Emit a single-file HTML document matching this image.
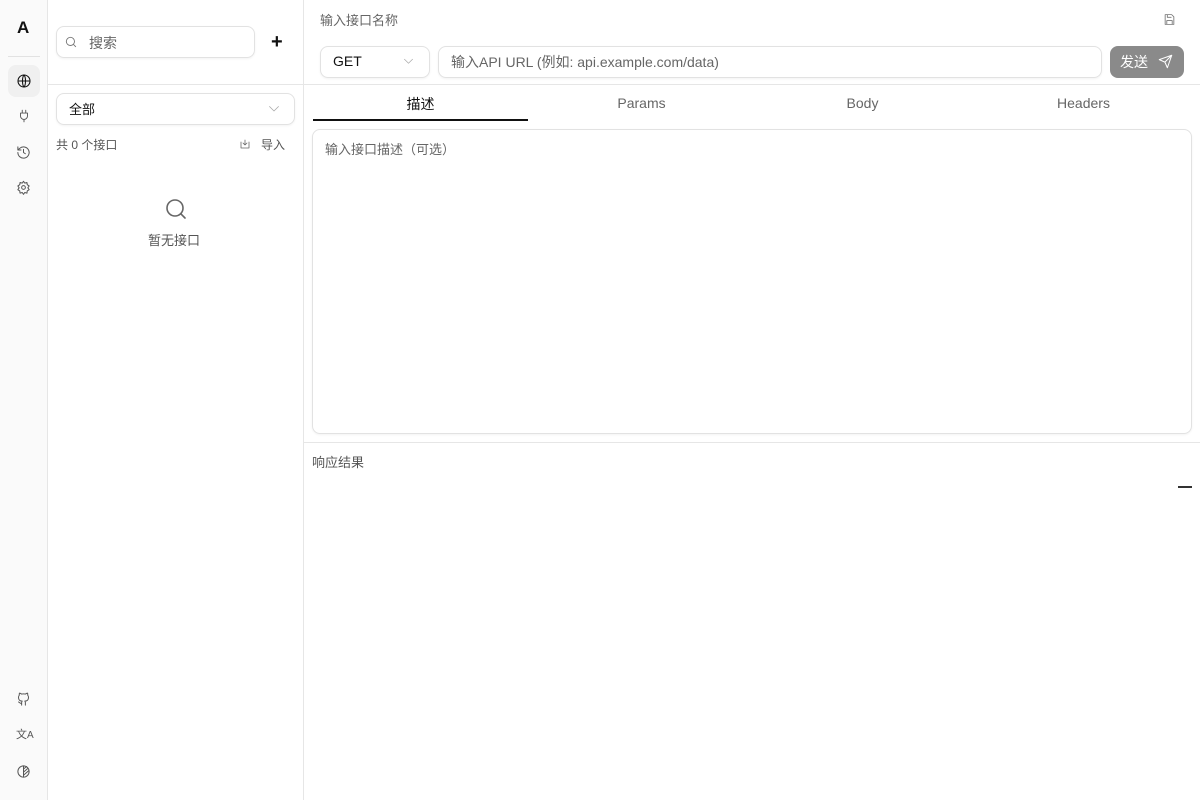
<!DOCTYPE html>
<html><head><meta charset="utf-8"><style>
*{box-sizing:border-box;margin:0;padding:0}
body{width:1200px;height:800px;overflow:hidden;background:#fff;font-family:"Liberation Sans","Noto Sans CJK SC",sans-serif;position:relative;color:#333}
.a{position:absolute}
svg{fill:none;stroke:currentColor;stroke-width:1.6;stroke-linecap:round;stroke-linejoin:round}
.ic{color:#555}
</style></head><body>
<div class="a" style="left:0;top:0;width:48px;height:800px;background:#fafafa;border-right:1px solid #e6e6e6"></div>
<div class="a" style="left:17px;top:18px;font-weight:bold;font-size:17px;color:#111">A</div>
<div class="a" style="left:8px;top:56px;width:32px;height:1px;background:#e2e2e2"></div>
<div class="a" style="left:8px;top:65px;width:32px;height:32px;border-radius:8px;background:#f0f0f0"></div>
<svg class="a" style="left:16px;top:73px;color:#111" width="16" height="16" viewBox="0 0 24 24"><circle cx="12" cy="12" r="9"/><path d="M3 12h18M12 3c3 3 3 15 0 18M12 3c-3 3-3 15 0 18"/></svg>
<svg class="a ic" style="left:17px;top:109px" width="14" height="14" viewBox="0 0 24 24"><path d="M9 2v5M15 2v5M6 7h12v5a6 6 0 0 1-12 0zM12 18v4"/></svg>
<svg class="a ic" style="left:16px;top:145px" width="15" height="15" viewBox="0 0 24 24"><path d="M3 12a9 9 0 1 0 3-6.7L3 8M3 3v5h5M12 7v5l3 2"/></svg>
<svg class="a ic" style="left:16px;top:180px" width="15" height="15" viewBox="0 0 24 24"><circle cx="12" cy="12" r="3"/><path d="M12 2l2 3 3.5-1 .5 3.5 3 2-2 3 2 3-3 2-.5 3.5-3.5-1-2 3-2-3-3.5 1-.5-3.5-3-2 2-3-2-3 3-2 .5-3.5 3.5 1z"/></svg>
<svg class="a ic" style="left:16px;top:692px" width="15" height="15" viewBox="0 0 24 24"><path d="M9 21v-4c0-1 .5-2 1-2.5-3 0-6-1.5-6-6 0-1.3.5-2.5 1.3-3.5-.2-1-.2-2.2.2-3.2 0 0 1.3 0 3.5 1.5a12 12 0 0 1 6 0C17.2 1.8 18.5 1.8 18.5 1.8c.4 1 .4 2.2.2 3.2.8 1 1.3 2.2 1.3 3.5 0 4.5-3 6-6 6 .5.5 1 1.5 1 2.5v4M9 18c-3 1-3-2-5-2"/></svg>
<div class="a ic" style="left:16px;top:726px;font-size:11px">文<span style="font-size:10px">A</span></div>
<svg class="a ic" style="left:16px;top:764px" width="15" height="15" viewBox="0 0 24 24"><circle cx="12" cy="12" r="9"/><path d="M12 3v18M12 8l5-4M12 13l7-6M12 18l8-7"/></svg>

<div class="a" style="left:303px;top:0;width:1px;height:800px;background:#e6e6e6"></div>
<div class="a" style="left:48px;top:84px;width:1152px;height:1px;background:#e6e6e6"></div>

<div class="a" style="left:56px;top:26px;width:199px;height:32px;border:1px solid #e2e2e2;border-radius:8px;box-shadow:0 1px 2px rgba(0,0,0,.05)"></div>
<svg class="a" style="left:64px;top:35px;color:#777" width="14" height="14" viewBox="0 0 24 24"><circle cx="11" cy="11" r="7"/><path d="M20 20l-4-4"/></svg>
<div class="a" style="left:89px;top:33px;font-size:14px;color:#666">搜索</div>
<div class="a" style="left:271px;top:31px;font-size:20px;font-weight:bold;color:#111">+</div>

<div class="a" style="left:56px;top:93px;width:239px;height:32px;border:1px solid #e2e2e2;border-radius:8px;box-shadow:0 1px 2px rgba(0,0,0,.05)"></div>
<div class="a" style="left:69px;top:99px;font-size:13px;color:#111">全部</div>
<svg class="a" style="left:268px;top:104px;color:#aaa" width="12" height="10" viewBox="0 0 24 20"><path d="M3 5l9 9 9-9"/></svg>
<div class="a" style="left:56px;top:136px;font-size:12px;color:#555">共 0 个接口</div>
<svg class="a" style="left:239px;top:138px;color:#666" width="12" height="12" viewBox="0 0 24 24"><path d="M4 8v12h16V8M12 4v10M8 10l4 4 4-4"/></svg>
<div class="a" style="left:261px;top:136px;font-size:12px;color:#555">导入</div>
<svg class="a" style="left:164px;top:197px;color:#666" width="24" height="24" viewBox="0 0 24 24"><circle cx="11" cy="11" r="8"/><path d="M21 21l-4.3-4.3"/></svg>
<div class="a" style="left:148px;top:230px;font-size:13px;color:#555">暂无接口</div>

<div class="a" style="left:320px;top:10px;font-size:13px;color:#666">输入接口名称</div>
<svg class="a" style="left:1163px;top:13px;color:#777" width="13" height="13" viewBox="0 0 24 24"><path d="M5 3h11l4 4v14H4V3zM8 3v5h7M7 21v-7h10v7"/></svg>
<div class="a" style="left:320px;top:46px;width:110px;height:32px;border:1px solid #e2e2e2;border-radius:8px;box-shadow:0 1px 2px rgba(0,0,0,.05)"></div>
<div class="a" style="left:333px;top:53px;font-size:14px;color:#111">GET</div>
<svg class="a" style="left:403px;top:57px;color:#aaa" width="11" height="9" viewBox="0 0 24 20"><path d="M3 5l9 9 9-9"/></svg>
<div class="a" style="left:438px;top:46px;width:664px;height:32px;border:1px solid #e2e2e2;border-radius:8px;box-shadow:0 1px 2px rgba(0,0,0,.05)"></div>
<div class="a" style="left:451px;top:52px;font-size:14px;color:#666">输入API URL (例如: api.example.com/data)</div>
<div class="a" style="left:1110px;top:46px;width:74px;height:32px;border-radius:8px;background:#8a8a8a"></div>
<div class="a" style="left:1120px;top:52px;font-size:14px;color:#fff">发送</div>
<svg class="a" style="left:1158px;top:54px;color:#fff" width="15" height="15" viewBox="0 0 24 24"><path d="M22 2L11 13M22 2l-7 20-4-9-9-4z"/></svg>

<div class="a" style="left:313px;top:94px;width:215px;text-align:center;font-size:14px;color:#111">描述</div>
<div class="a" style="left:313px;top:119px;width:215px;height:2px;background:#111"></div>
<div class="a" style="left:534px;top:95px;width:215px;text-align:center;font-size:14px;color:#666">Params</div>
<div class="a" style="left:755px;top:95px;width:215px;text-align:center;font-size:14px;color:#666">Body</div>
<div class="a" style="left:976px;top:95px;width:215px;text-align:center;font-size:14px;color:#666">Headers</div>
<div class="a" style="left:312px;top:129px;width:880px;height:305px;border:1px solid #e2e2e2;border-radius:8px;box-shadow:0 1px 2px rgba(0,0,0,.05)"></div>
<div class="a" style="left:325px;top:139px;font-size:13px;color:#666">输入接口描述（可选）</div>
<div class="a" style="left:304px;top:442px;width:896px;height:1px;background:#e6e6e6"></div>
<div class="a" style="left:312px;top:452px;font-size:13px;color:#555">响应结果</div>
<div class="a" style="left:1178px;top:486px;width:14px;height:2px;background:#333"></div>
</body></html>
